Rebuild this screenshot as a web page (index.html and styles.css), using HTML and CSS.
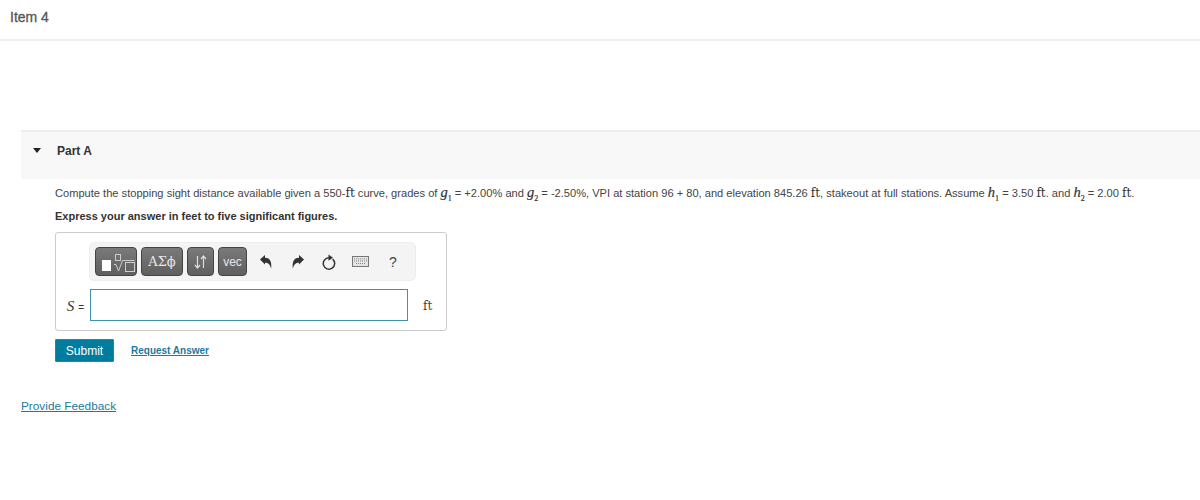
FILE: index.html

```html
<!DOCTYPE html>
<html lang="en">
<head>
    <meta charset="UTF-8">
    <title>Item 4</title>
    <link rel="stylesheet" href="styles.css">
</head>
<body>
    <header class="item-header">Item 4</header>

    <section class="part">
        <div class="part-title">
            <span class="caret"></span>
            <span>Part A</span>
        </div>

        <div class="part-body">
            <p class="question">Compute the stopping sight distance available given a 550-<span class="m">ft</span> curve, grades of <span class="v"><i>g</i><sub>1</sub></span> = +2.00% and <span class="v"><i>g</i><sub>2</sub></span> = -2.50%, VPI at station 96 + 80, and elevation 845.26 <span class="m">ft</span>, stakeout at full stations. Assume <span class="v"><i>h</i><sub>1</sub></span> = 3.50 <span class="m">ft</span>. and <span class="v"><i>h</i><sub>2</sub></span> = 2.00 <span class="m">ft</span>.</p>
            <p class="instruction">Express your answer in feet to five significant figures.</p>

            <div class="answer-box">
                <div class="toolbar">
                    <button class="tool tool-template">
                        <span class="blank"></span>
                        <svg width="23" height="20" viewBox="0 0 23 20" fill="none" stroke="#ccc" stroke-width="1">
                            <rect x="2.500" y="2.500" width="5" height="6"/>
                            <path d="M1 12.500h2l2.500 6.500l4-10.500h12"/>
                            <rect x="12.500" y="10.500" width="9" height="9"/>
                        </svg>
                    </button>
                    <button class="tool tool-greek">ΑΣϕ</button>
                    <button class="tool tool-arrows">
                        <svg width="13" height="14" viewBox="0 0 13 14" fill="none" stroke="#ddd" stroke-width="1.200">
                            <path d="M3.500 1v12M1 10l2.500 3l2.500-3"/>
                            <path d="M9.500 13v-12M7 4l2.500-3l2.500 3"/>
                        </svg>
                    </button>
                    <button class="tool tool-vec">vec</button>

                    <span class="action action-undo">
                        <svg width="12" height="14" viewBox="0 0 12 14"><path d="M0 4.500L5 0v2.800c4.200 0 7 2.700 6.200 11c-1-4.200-2.800-6-6.200-6v1.700z" fill="#333"/></svg>
                    </span>
                    <span class="action action-redo">
                        <svg width="12" height="14" viewBox="0 0 12 14"><path d="M12 4.500L7 0v2.800c-4.200 0-7 2.700-6.200 11c1-4.200 2.800-6 6.200-6v1.700z" fill="#333"/></svg>
                    </span>
                    <span class="action action-reset">
                        <svg width="14" height="16" viewBox="0 0 14 16" fill="none"><path d="M10.600 5.100A5.700 5.700 0 1 1 7 3.800" stroke="#333" stroke-width="1.500"/><path d="M6.500 0.500l4.500 3.300l-4.500 3z" fill="#333"/></svg>
                    </span>
                    <span class="action action-keys">
                        <svg width="17" height="11" viewBox="0 0 17 11"><rect x="0.500" y="0.500" width="16" height="10" fill="#e4e4e4" stroke="#777"/><path d="M2 3h13M2 5h13M4 7.500h9" stroke="#888" stroke-dasharray="1 1"/></svg>
                    </span>
                    <span class="action action-help">?</span>
                </div>

                <div class="answer-row">
                    <span class="answer-label"><i class="answer-var">S</i> <span class="equals">=</span></span>
                    <input class="answer-input" type="text">
                    <span class="answer-unit">ft</span>
                </div>
            </div>

            <div class="buttons">
                <button class="submit">Submit</button>
                <a class="request" href="#">Request Answer</a>
            </div>
        </div>
    </section>

    <a class="feedback" href="#">Provide Feedback</a>
</body>
</html>
```

FILE: styles.css

```css
/* General Styles */
body {
    font-family: 'Liberation Sans', Arial, sans-serif;
    margin: 0;
    padding: 0;
    background: #fff;
    color: #333;
    overflow: hidden;
}

/* Header */
.item-header {
    height: 41px;
    padding: 9px 0 0 10px;
    box-sizing: border-box;
    border-bottom: 2px solid #eee;
    font-size: 14px;
    line-height: 16px;
    color: #555;
    -webkit-text-stroke: 0.3px #555;
}

/* Part */
.part {
    margin: 89px 0 0 21px;
}

.part-title {
    display: flex;
    align-items: center;
    height: 49px;
    padding: 0 0 10px 12px;
    box-sizing: border-box;
    background: #f8f8f8;
    border-top: 2px solid #eee;
    font-size: 12px;
    font-weight: bold;
    color: #333;
}

.caret {
    width: 0;
    height: 0;
    margin-right: 16px;
    border-left: 4.500px solid transparent;
    border-right: 4.500px solid transparent;
    border-top: 5px solid #222;
}

.part-body {
    padding: 0 0 0 34px;
}

.question {
    margin: 0;
    padding-top: 6px;
    height: 23px;
    white-space: nowrap;
    font-size: 11.100px;
    line-height: 16px;
    color: #444;
}

.m {
    font-family: 'DejaVu Serif', 'Liberation Serif', serif;
    font-size: 12px;
    color: #333;
}

.v {
    font-family: 'Liberation Serif', serif;
    font-size: 14.500px;
    line-height: 0;
    color: #333;
    -webkit-text-stroke: 0.2px #333;
}

.v sub {
    font-size: 8px;
    line-height: 0;
}

.instruction {
    margin: 0;
    height: 24px;
    font-size: 11px;
    font-weight: bold;
    line-height: 16px;
    color: #333;
}

/* Answer box */
.answer-box {
    width: 392px;
    height: 99px;
    padding: 9px 0 0 0;
    box-sizing: border-box;
    border: 1px solid #ccc;
    border-radius: 3px;
}

.toolbar {
    display: flex;
    align-items: center;
    width: 327px;
    height: 39px;
    margin-left: 33px;
    padding-left: 5px;
    box-sizing: border-box;
    background: #f4f4f4;
    border: 1px solid #eee;
    border-radius: 5px;
}

.tool {
    display: flex;
    align-items: center;
    justify-content: center;
    height: 29px;
    margin: 0 4px 0 0;
    padding: 0;
    box-sizing: border-box;
    background: linear-gradient(#7a7a7a, #5f5f5f);
    border: 1px solid #444;
    border-radius: 4px;
    color: #e6e6e6;
}

.tool-template {
    width: 42px;
    gap: 2px;
    justify-content: flex-start;
    padding-left: 6px;
}

.blank {
    width: 9px;
    height: 11px;
    margin-top: 8px;
    background: #fff;
}

.tool-greek {
    width: 42px;
    font-family: 'DejaVu Serif', serif;
    font-size: 13px;
}

.tool-arrows {
    width: 27px;
}

.tool-vec {
    width: 29px;
    margin-right: 0;
    font-family: inherit;
    font-size: 12px;
}

.action {
    display: flex;
    align-items: center;
    justify-content: center;
    color: #444;
}

.action-undo {
    margin-left: 13px;
    width: 12px;
}

.action-redo {
    margin-left: 20px;
    width: 12px;
}

.action-reset {
    margin-left: 18px;
    width: 14px;
}

.action-keys {
    margin-left: 16px;
    width: 17px;
}

.action-help {
    margin-left: 20px;
    font-size: 14px;
}

.answer-row {
    display: flex;
    align-items: center;
    height: 32px;
    margin-top: 8px;
}

.answer-label {
    width: 34px;
    padding: 2px 6px 0 0;
    box-sizing: border-box;
    text-align: right;
    white-space: nowrap;
    font-family: 'Liberation Serif', serif;
}

.answer-var {
    font-size: 15px;
}

.equals {
    font-family: 'Liberation Sans', Arial, sans-serif;
    font-size: 10px;
}

.answer-input {
    width: 318px;
    height: 32px;
    margin: 0;
    padding: 0;
    box-sizing: border-box;
    border: 1px solid #3d93ad;
    outline: none;
}

.answer-unit {
    margin-left: 15px;
    padding-top: 2px;
    font-family: 'DejaVu Serif', serif;
    font-size: 12px;
    color: #444;
}

/* Buttons */
.buttons {
    display: flex;
    align-items: center;
    margin-top: 8px;
}

.submit {
    width: 59px;
    height: 23px;
    padding: 0;
    background: #007c9f;
    border: 1px solid #1a89a8;
    border-radius: 1px;
    color: #fff;
    font-family: inherit;
    font-size: 12px;
}

.request {
    margin-left: 17px;
    font-size: 10px;
    font-weight: bold;
    color: #1c7a9c;
    text-decoration: underline;
}

.feedback {
    display: block;
    margin: 37px 0 0 21px;
    width: max-content;
    font-size: 11.800px;
    color: #1c7a9c;
    text-decoration: underline;
}
```
